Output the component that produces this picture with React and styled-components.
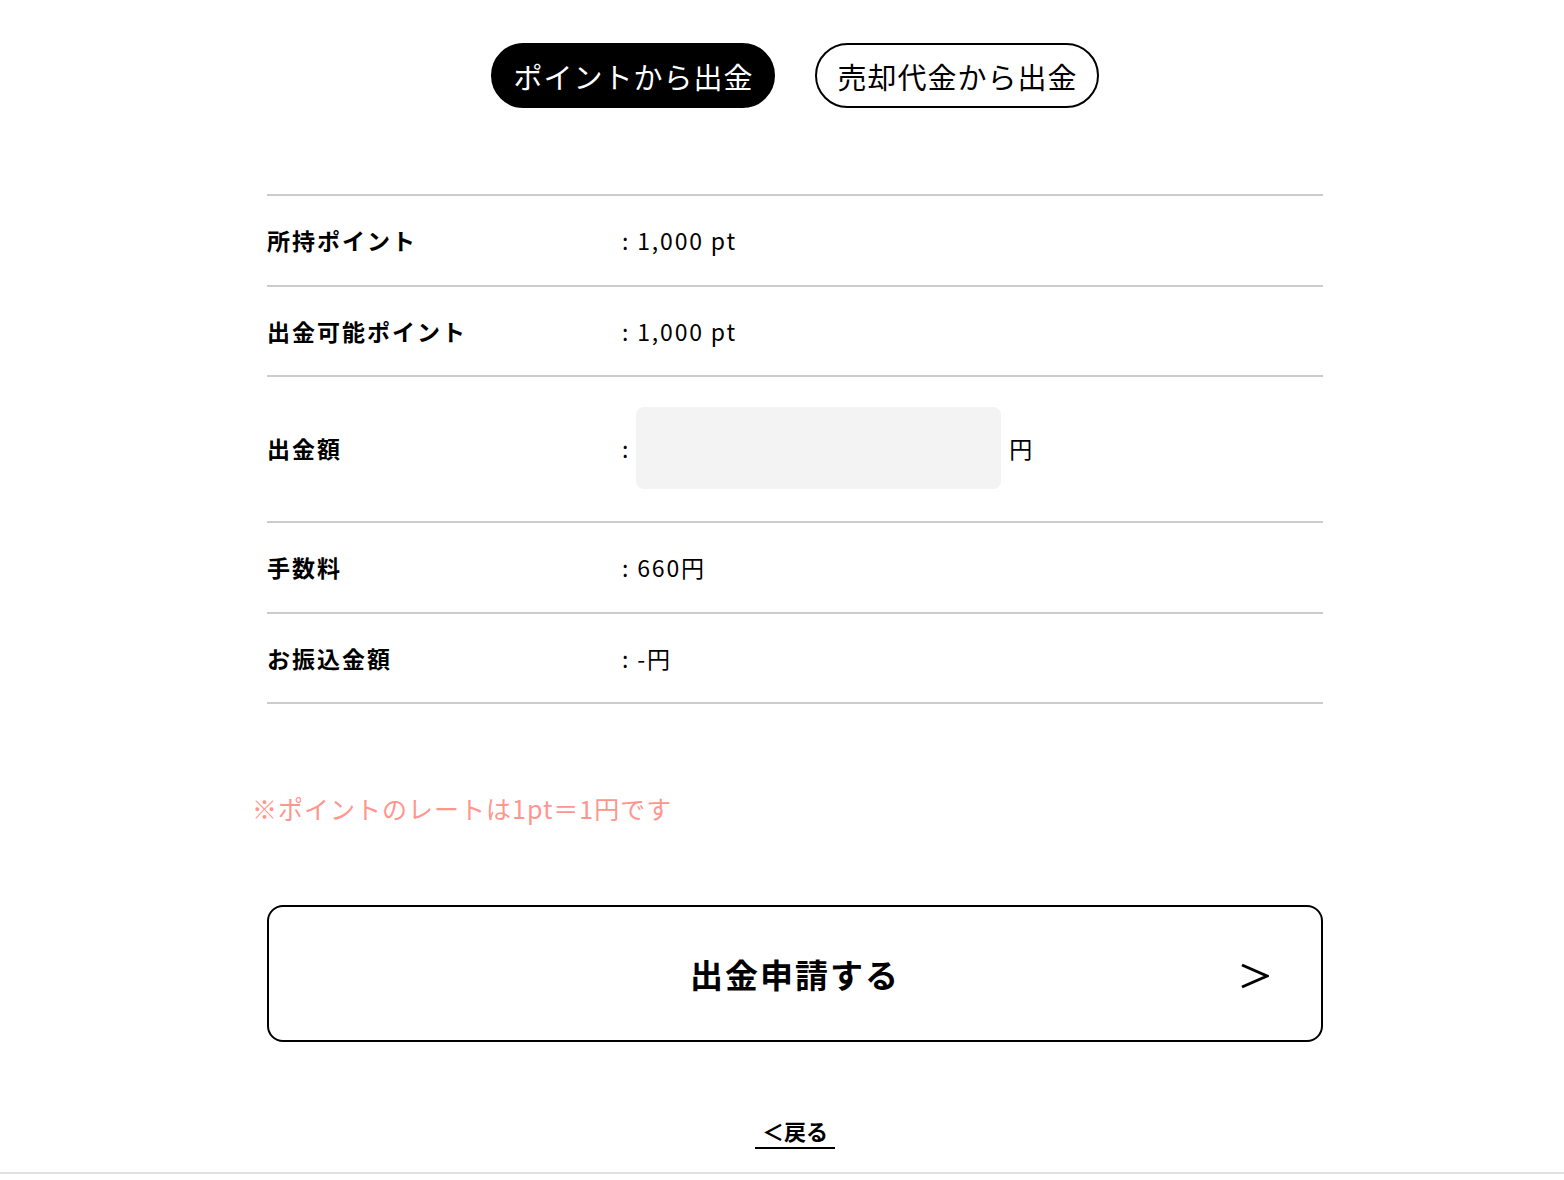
import React, { useState } from 'react';
import styled, { createGlobalStyle } from 'styled-components';

const GlobalStyle = createGlobalStyle`
  html, body {
    margin: 0;
    padding: 0;
    background: #fff;
  }
  body {
    font-family: "Noto Sans CJK JP", "Noto Sans", sans-serif;
    color: #000;
  }
`;

const Page = styled.div`
  padding-left: 26px;
`;

const Main = styled.main`
  width: 1056px;
  margin: 0 auto;
  padding-top: 43px;
`;

const Tabs = styled.div`
  display: flex;
  justify-content: center;
  gap: 40px;
`;

const Tab = styled.button`
  width: 284px;
  height: 65px;
  border-radius: 33px;
  border: 2px solid #000;
  background: ${props => props.active ? '#000' : '#fff'};
  color: ${props => props.active ? '#fff' : '#000'};
  font-family: inherit;
  font-size: 29px;
  font-weight: 400;
  letter-spacing: 1px;
  padding: 0 0 0 1px;
  cursor: pointer;
`;

const Table = styled.div`
  margin-top: 86px;
  border-top: 2px solid #ccc;
`;

const Row = styled.div`
  display: grid;
  grid-template-columns: 355px 1fr;
  align-items: center;
  padding: ${props => props.tall ? '30px 0 32px' : '30px 0 30.5px'};
  border-bottom: 2px solid #ccc;
  font-size: 23px;
  line-height: 28px;
`;

const Label = styled.div`
  font-size: 23px;
  font-weight: 700;
  letter-spacing: 2px;
`;

const Value = styled.div`
  display: flex;
  align-items: center;
  letter-spacing: 0.08em;
`;

const AmountInput = styled.input`
  width: 365px;
  height: 82px;
  box-sizing: border-box;
  margin: 0 8px 0 6px;
  border: none;
  border-radius: 8px;
  background: #f3f3f3;
  font-family: inherit;
  font-size: 22px;
  padding: 0 16px;
  outline: none;
`;

const Note = styled.p`
  margin: 86px 0 0 -15px;
  font-size: 25px;
  line-height: 36px;
  color: #ff968d;
  letter-spacing: 1px;
`;

const SubmitButton = styled.button`
  display: grid;
  grid-template-columns: 1fr auto 1fr;
  align-items: center;
  width: 100%;
  height: 137px;
  margin-top: 79px;
  padding: 0 52px;
  box-sizing: border-box;
  border: 2px solid #000;
  border-radius: 16px;
  background: #fff;
  color: #000;
  font-family: inherit;
  cursor: pointer;
`;

const SubmitLabel = styled.span`
  grid-column: 2;
  font-size: 33px;
  font-weight: 700;
  letter-spacing: 0.06em;
`;

const Arrow = styled.svg`
  justify-self: end;
  width: 29px;
  height: 26px;
  margin-top: 4px;
`;

const BackWrap = styled.div`
  display: flex;
  justify-content: center;
  margin-top: 75px;
`;

const BackLink = styled.a`
  display: inline-block;
  padding: 0 7px 4px;
  font-size: 22px;
  line-height: 26px;
  font-weight: 700;
  color: #000;
  text-decoration: none;
  border-bottom: 2px solid #000;
  cursor: pointer;
`;

const Footer = styled.footer`
  margin-top: 23px;
  border-top: 2px solid #e0e0e0;
  height: 40px;
`;

export default function App() {
  const [mode, setMode] = useState('point');
  const [amount, setAmount] = useState('');

  return (
    <>
      <GlobalStyle />
      <Page>
        <Main>
          <Tabs>
            <Tab active={mode === 'point'} onClick={() => setMode('point')}>ポイントから出金</Tab>
            <Tab active={mode === 'sales'} onClick={() => setMode('sales')}>売却代金から出金</Tab>
          </Tabs>

          <Table>
            <Row>
              <Label>所持ポイント</Label>
              <Value>: 1,000 pt</Value>
            </Row>
            <Row>
              <Label>出金可能ポイント</Label>
              <Value>: 1,000 pt</Value>
            </Row>
            <Row tall>
              <Label>出金額</Label>
              <Value>
                :
                <AmountInput value={amount} onChange={e => setAmount(e.target.value)} />
                円
              </Value>
            </Row>
            <Row>
              <Label>手数料</Label>
              <Value>: 660円</Value>
            </Row>
            <Row>
              <Label>お振込金額</Label>
              <Value>: -円</Value>
            </Row>
          </Table>

          <Note>※ポイントのレートは1pt＝1円です</Note>

          <SubmitButton>
            <SubmitLabel>出金申請する</SubmitLabel>
            <Arrow viewBox="0 0 29 26">
              <polyline points="2,2 27,13 2,24" fill="none" stroke="#000" strokeWidth="3" />
            </Arrow>
          </SubmitButton>

          <BackWrap>
            <BackLink>＜戻る</BackLink>
          </BackWrap>
        </Main>
      </Page>
      <Footer />
    </>
  );
}
